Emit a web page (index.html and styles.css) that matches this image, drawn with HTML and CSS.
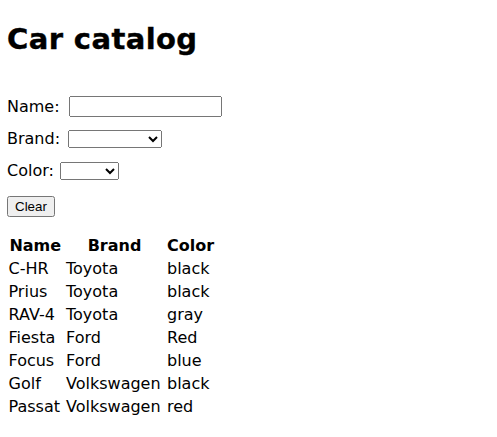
FILE: index.html
```html
<!DOCTYPE html>
<html lang="en">
<head>
<meta charset="utf-8">
<title>Car catalog</title>
<link rel="stylesheet" href="styles.css">
</head>
<body>
<h1 class="title">Car catalog</h1>
<form class="filters">
  <div class="row row-name">
    <label class="lbl" for="name">Name:</label>
    <input class="txt" id="name" type="text">
  </div>
  <div class="row">
    <label class="lbl" for="brand">Brand:</label>
    <select class="sel sel-brand" id="brand">
      <option value=""></option>
      <option>Toyota</option>
      <option>Ford</option>
      <option>Volkswagen</option>
    </select>
  </div>
  <div class="row">
    <label class="lbl" for="color">Color:</label>
    <select class="sel sel-color" id="color">
      <option value=""></option>
      <option>black</option>
      <option>gray</option>
      <option>Red</option>
      <option>blue</option>
      <option>red</option>
    </select>
  </div>
  <div class="actions">
    <button class="btn" type="reset">Clear</button>
  </div>
</form>
<table class="cars">
  <thead>
    <tr><th class="c-name">Name</th><th class="c-brand">Brand</th><th class="c-color">Color</th></tr>
  </thead>
  <tbody>
    <tr><td>C-HR</td><td>Toyota</td><td>black</td></tr>
    <tr><td>Prius</td><td>Toyota</td><td>black</td></tr>
    <tr><td>RAV-4</td><td>Toyota</td><td>gray</td></tr>
    <tr><td>Fiesta</td><td>Ford</td><td>Red</td></tr>
    <tr><td>Focus</td><td>Ford</td><td>blue</td></tr>
    <tr><td>Golf</td><td>Volkswagen</td><td>black</td></tr>
    <tr><td>Passat</td><td>Volkswagen</td><td>red</td></tr>
  </tbody>
</table>
</body>
</html>
```
FILE: styles.css
```css
html, body {
  background: #ffffff;
}
body {
  margin: 0;
  padding: 0 7px;
  font-family: "DejaVu Sans", "Noto Sans", sans-serif;
  font-size: 16px;
  color: #000;
}
.title {
  margin: 21px 0 0;
  font-size: 29px;
  line-height: 36px;
  font-weight: bold;
  letter-spacing: 0.4px;
  -webkit-text-stroke: 0.4px #000;
}
.filters {
  margin: 39px 0 0;
  display: flex;
  flex-direction: column;
  align-items: flex-start;
}
.row {
  display: flex;
  align-items: center;
  gap: 8px;
  height: 21px;
  margin-bottom: 11px;
}
.lbl {
  line-height: 19px;
}
.txt {
  box-sizing: border-box;
  width: 153px;
  height: 21px;
  margin: 0 0 0 1px;
}
.sel {
  box-sizing: border-box;
  height: 18px;
  margin: 0;
}
.sel-brand {
  width: 94px;
}
.sel-color {
  width: 59px;
  margin-left: -2px;
}
.actions {
  margin-top: 4px;
}
.btn {
  margin: 0;
}
.cars {
  margin: 17px 0 0 1.5px;
  border-spacing: 0;
  line-height: 19px;
}
.cars th, .cars td {
  padding: 2px 4px 2px 0;
  white-space: nowrap;
}
.cars td {
  text-align: left;
}
.c-name {
  width: 53.5px;
}
.c-brand {
  width: 97px;
}
```
